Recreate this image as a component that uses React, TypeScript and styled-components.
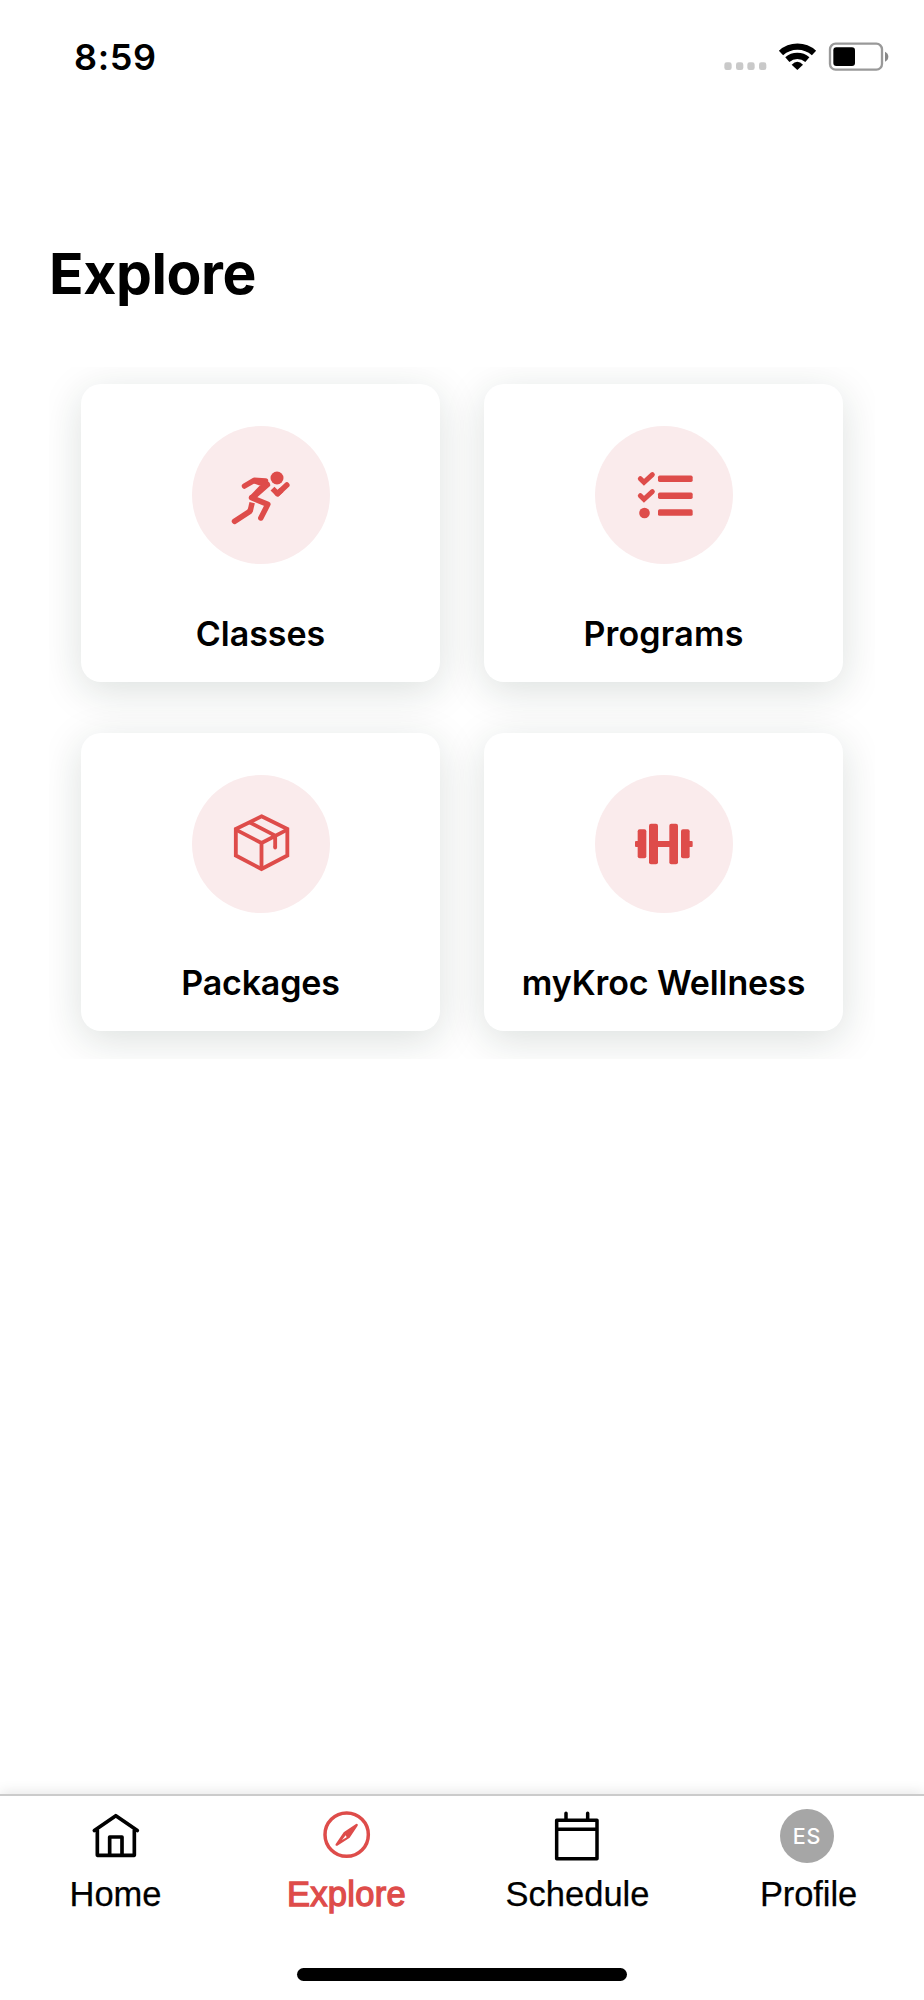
import React from "react";
import styled, { createGlobalStyle } from "styled-components";

const RED = "#de4c4a";

const GlobalStyle = createGlobalStyle`
  * { box-sizing: border-box; }
  body { margin: 0; background: #fff; }
`;

const Screen = styled.div`
  width: 924px;
  height: 2000px;
  display: flex;
  flex-direction: column;
  overflow: hidden;
  background: #fff;
  color: #000;
  font-family: Inter, "Liberation Sans", sans-serif;
`;

const StatusBar = styled.header`
  height: 100px;
  padding: 20px 0 0 74px;
  display: flex;
  justify-content: space-between;
`;

const Time = styled.span`
  font-size: 36px;
  font-weight: 600;
  line-height: 74px;
  letter-spacing: 0.6px;
`;

const Main = styled.main`
  flex: 1;
  display: flex;
  flex-direction: column;
  padding: 132px 49px 0;
`;

const Title = styled.h1`
  margin: 0;
  height: 135px;
  font-size: 57px;
  font-weight: 700;
  line-height: 84px;
  letter-spacing: -0.4px;
`;

const CardGrid = styled.section`
  width: 826px;
  height: 692px;
  padding: 17px 31.5px 0 32px;
  display: grid;
  grid-template-columns: 359px 359px;
  grid-template-rows: 297.5px 297.5px;
  column-gap: 44px;
  row-gap: 51.5px;
  overflow: hidden;
`;

const Card = styled.button`
  display: flex;
  flex-direction: column;
  align-items: center;
  padding: 42px 0 0;
  border: 0;
  border-radius: 20px;
  background: #fff;
  color: #000;
  font: inherit;
  box-shadow: 0 9px 40px rgba(20, 45, 35, 0.15);
`;

const IconDisc = styled.span`
  width: 138px;
  height: 138px;
  display: flex;
  align-items: center;
  justify-content: center;
  border-radius: 50%;
  background: #faebec;
`;

const CardLabel = styled.span<{ $spacing: number }>`
  margin-top: 46px;
  font-size: 34px;
  font-weight: 600;
  line-height: 48px;
  white-space: nowrap;
  letter-spacing: ${(p) => p.$spacing}px;
`;

const TabBar = styled.nav`
  height: 206px;
  display: flex;
  flex-direction: column;
  align-items: center;
  border-top: 2px solid #cbcbcb;
  background: #fff;
  box-shadow: 0 -2px 12px rgba(0, 0, 0, 0.1);
`;

const Tabs = styled.div`
  width: 100%;
  height: 172px;
  display: grid;
  grid-template-columns: repeat(4, 1fr);
`;

const Tab = styled.button<{ $active?: boolean }>`
  display: flex;
  flex-direction: column;
  align-items: center;
  padding: 12px 0 0;
  border: 0;
  background: none;
  color: ${(p) => (p.$active ? RED : "#000")};
`;

const TabLabel = styled.span<{ $active?: boolean; $spacing: number }>`
  margin-top: 7px;
  font-family: "Liberation Sans", Arial, sans-serif;
  font-size: 34.5px;
  line-height: 48px;
  letter-spacing: ${(p) => p.$spacing}px;
  -webkit-text-stroke: ${(p) => (p.$active ? "1.3px currentColor" : "0.25px currentColor")};
`;

const AvatarSlot = styled.span`
  height: 55px;
  padding: 1px 3px 0 0;
`;

const Avatar = styled.span`
  width: 54px;
  height: 54px;
  display: flex;
  align-items: center;
  justify-content: center;
  border-radius: 50%;
  background: #a6a6a6;
  color: #fff;
  font-family: Inter, sans-serif;
  font-size: 21.5px;
  font-weight: 500;
  letter-spacing: 0.8px;
`;

const HomeIndicator = styled.div`
  width: 330px;
  height: 12.5px;
  border-radius: 7px;
  background: #000;
`;

const StatusIcons = () => (
  <svg width="220" height="80" viewBox="0 0 660 240">
    {[61, 96, 130, 165].map((x) => (
      <rect key={x} x={x} y="127" width="22" height="23" rx="7" fill="#c9c9c9" />
    ))}
    <g fill="none" stroke="#000" strokeWidth="19">
      <path d="M231 99A74 74 0 0 1 330 99" />
      <path d="M250 119A46 46 0 0 1 310 119" />
    </g>
    <path d="M263 134Q280 116 297 134L280 150Z" />
    <rect x="378" y="71" width="156" height="78" rx="17" fill="none" stroke="#999" strokeWidth="7" />
    <rect x="388" y="82" width="65" height="56" rx="9" />
    <path d="M543 95Q553 100 553 110T543 125Z" fill="#888" />
  </svg>
);

const RunnerIcon = () => (
  <svg width="80" height="70" viewBox="2.5 0 240 210" fill="none" stroke={RED} strokeWidth="16.500" strokeLinecap="round" strokeLinejoin="round">
    <circle cx="170.500" cy="54" r="19.500" fill={RED} stroke="none" />
    <path d="M73 78L102 61L136 63" />
    <path d="M102 61L136 63Q148 67 148 76L102 117Q90 119 89 111L123 76L102 68Z" fill={RED} strokeWidth="5" />
    <path d="M94 113L143 133L122 174" />
    <path d="M96 128L90 153" strokeLinecap="butt" />
    <path d="M90 151L89 154L43 184" />
    <path d="M157 86L172 101L184 90" strokeLinecap="butt" />
    <path d="M172 101L200 75" />
  </svg>
);

const ChecklistIcon = () => (
  <svg width="80" height="70" viewBox="492 300 240 210" fill={RED}>
    {[0, 51].map((dy) => (
      <path
        key={dy}
        transform={`translate(0 ${dy})`}
        d="M541 356L552 367L577 344"
        fill="none"
        stroke={RED}
        strokeWidth="15"
        strokeLinecap="round"
      />
    ))}
    <circle cx="553.500" cy="459" r="16" />
    {[346.5, 397.5, 448].map((y) => (
      <rect key={y} x="594" y={y} width="104" height="19.500" rx="5" />
    ))}
  </svg>
);

const PackageIcon = () => (
  <svg width="80" height="70" viewBox="542.5 297 240 210" fill="none" stroke={RED} strokeWidth="11.500">
    <path d="M664 319L741.500 357V436.500L664 477L587 436.500V357Z" />
    <path d="M587 359L664 399L741.500 359M664 399V477M628 337L705 377V412" />
    <circle cx="705" cy="412.500" r="5.700" fill={RED} stroke="none" />
  </svg>
);

const DumbbellIcon = () => (
  <svg width="80" height="70" viewBox="492 297 240 210" fill={RED}>
    <rect x="525" y="393" width="15" height="18" rx="3" />
    <rect x="683" y="393" width="15" height="18" rx="3" />
    <rect x="533" y="358" width="26" height="87" rx="6" />
    <rect x="663" y="358" width="26" height="87" rx="6" />
    <rect x="567" y="341" width="27" height="122" rx="6" />
    <rect x="628" y="341" width="26" height="122" rx="6" />
    <rect x="590" y="393" width="42" height="18" />
  </svg>
);

const HomeIcon = () => (
  <svg width="80" height="55" viewBox="228 85 240 165" fill="none" stroke="#000" strokeWidth="11" strokeLinecap="round" strokeLinejoin="round">
    <path d="M283 152.500L347.500 108L412 152.500M292 152V227H403V152M329 227V172H366V227" />
  </svg>
);

const CompassIcon = () => (
  <svg width="80" height="55" viewBox="921 85 240 165" fill="none" stroke={RED}>
    <circle cx="1040" cy="165" r="65" strokeWidth="10.500" />
    <path
      d="M1070 136L1034 160L1010 195L1046 172Z"
      fill={RED}
      strokeWidth="7"
      strokeLinejoin="round"
    />
    <path d="M1037 167L1026 181L1040 173Z" fill="#fff" stroke="none" />
  </svg>
);

const CalendarIcon = () => (
  <svg width="80" height="55" viewBox="228 85 240 165" fill="none" stroke="#000" strokeWidth="10.500" strokeLinejoin="round" strokeLinecap="round">
    <path d="M284 122H405V237.500H284ZM284 149H405M312 101V120M377 101V120" />
  </svg>
);

const cards = [
  { label: "Classes", spacing: 0, Icon: RunnerIcon },
  { label: "Programs", spacing: 0.2, Icon: ChecklistIcon },
  { label: "Packages", spacing: -0.2, Icon: PackageIcon },
  { label: "myKroc Wellness", spacing: -0.1, Icon: DumbbellIcon },
];

export default function App() {
  return (
    <>
      <GlobalStyle />
      <Screen>
        <StatusBar>
          <Time>8:59</Time>
          <StatusIcons />
        </StatusBar>
        <Main>
          <Title>Explore</Title>
          <CardGrid>
            {cards.map(({ label, spacing, Icon }) => (
              <Card key={label}>
                <IconDisc>
                  <Icon />
                </IconDisc>
                <CardLabel $spacing={spacing}>{label}</CardLabel>
              </Card>
            ))}
          </CardGrid>
        </Main>
        <TabBar>
          <Tabs>
            <Tab>
              <HomeIcon />
              <TabLabel $spacing={0}>Home</TabLabel>
            </Tab>
            <Tab $active>
              <CompassIcon />
              <TabLabel $active $spacing={0.3}>Explore</TabLabel>
            </Tab>
            <Tab>
              <CalendarIcon />
              <TabLabel $spacing={0}>Schedule</TabLabel>
            </Tab>
            <Tab>
              <AvatarSlot>
                <Avatar>ES</Avatar>
              </AvatarSlot>
              <TabLabel $spacing={-0.1}>Profile</TabLabel>
            </Tab>
          </Tabs>
          <HomeIndicator />
        </TabBar>
      </Screen>
    </>
  );
}
